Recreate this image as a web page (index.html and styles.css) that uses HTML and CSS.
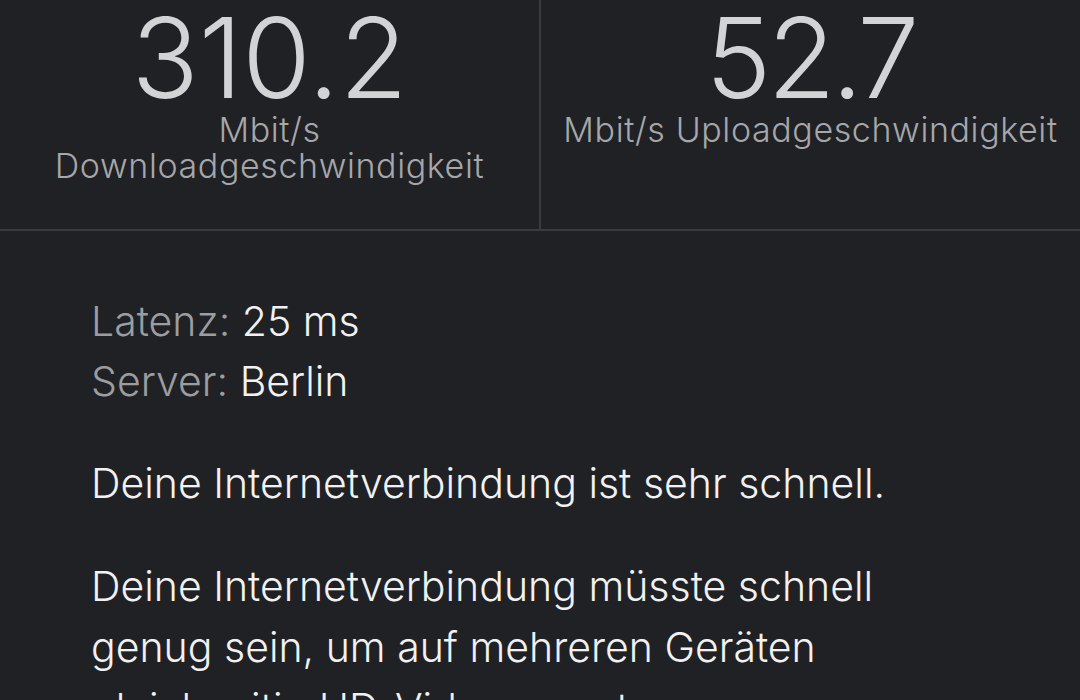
FILE: index.html
```html
<!DOCTYPE html>
<html lang="de">
<head>
 <meta charset="UTF-8">
 <meta name="viewport" content="width=device-width, initial-scale=1.0">
 <title>Speedtest</title>
 <link rel="stylesheet" href="styles.css">
</head>
<body>

 <div class="speeds">
  <div class="speedBox">
   <div class="speedValue">310.2</div>
   <div class="speedLabel">Mbit/s<br/>Downloadgeschwindigkeit</div>
  </div>
  <div class="speedBox">
   <div class="speedValue narrow">52.7</div>
   <div class="speedLabel">Mbit/s Uploadgeschwindigkeit</div>
  </div>
 </div>

 <div class="details">
  <div class="facts">
   <div><span class="factKey">Latenz:</span> 25 ms</div>
   <div><span class="factKey">Server:</span> Berlin</div>
  </div>
  <p class="note">Deine Internetverbindung ist sehr schnell.</p>
  <p class="note">Deine Internetverbindung müsste schnell genug sein, um auf mehreren Geräten gleichzeitig HD-Videos zu streamen.</p>
 </div>

</body>
</html>
```

FILE: styles.css
```css
html, body{
 margin: 0;
 padding: 0;
 background-color: #202124;
 font-family: Inter, "Noto Sans", sans-serif;
 overflow: hidden;
}

.speeds{
 display: flex;
 height: 229px;
 border-bottom: 2px solid #3a3b3f;
}

.speedBox{
 flex: 1;
 display: flex;
 flex-direction: column;
 align-items: center;
 text-align: center;
}

.speedBox + .speedBox{
 border-left: 2px solid #3a3b3f;
}

.speedValue{
 color: #d2d3d5;
 font-size: 111px;
 font-weight: 300;
 line-height: 111px;
 margin-top: 2px;
}

.speedValue.narrow{
 letter-spacing: -4px;
}

.speedLabel{
 color: #a6a7aa;
 font-size: 34px;
 font-weight: 300;
 letter-spacing: 0.6px;
 line-height: 36px;
 margin-top: -1px;
}

.details{
 padding: 0 91px;
}

.facts{
 margin-top: 60px;
 color: #f1f1f1;
 font-size: 41px;
 font-weight: 300;
 line-height: 60px;
}

.factKey{
 color: #9c9da0;
}

.note{
 margin: 42px 0 0;
 max-width: 820px;
 color: #f1f1f1;
 font-size: 41px;
 font-weight: 300;
 line-height: 61px;
}
```
